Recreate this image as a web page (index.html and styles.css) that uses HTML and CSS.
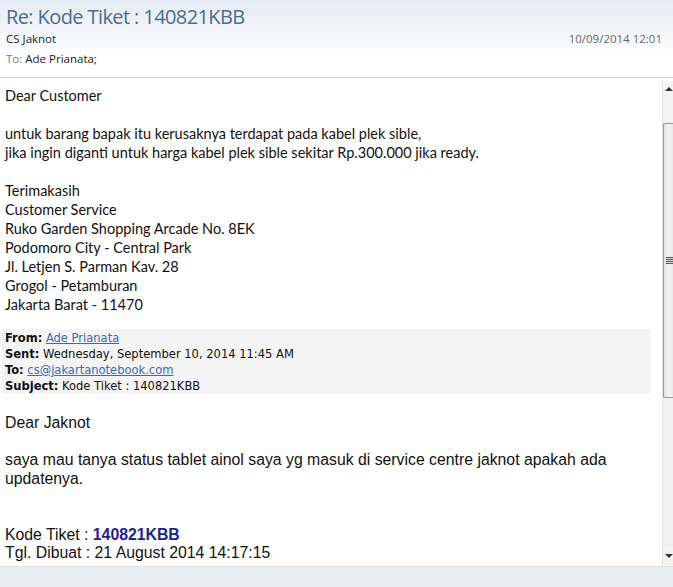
FILE: index.html
```html
<!DOCTYPE html>
<html>
<head>
<meta charset="utf-8">
<link rel="stylesheet" href="styles.css">
</head>
<body>
<div class="window">
  <header class="head">
    <div class="title">Re: Kode Tiket : 140821KBB</div>
    <div class="meta">
      <span class="sender">CS Jaknot</span>
      <span class="date">10/09/2014 12:01</span>
    </div>
    <div class="to"><span class="to-label">To:</span> Ade Prianata;</div>
  </header>
  <div class="sep"></div>
  <div class="main">
    <div class="content">
      <div class="reply">
        <p>Dear Customer</p>
        <p class="blank">&nbsp;</p>
        <p>untuk barang bapak itu kerusaknya terdapat pada kabel plek sible,</p>
        <p>jika ingin diganti untuk harga kabel plek sible sekitar Rp.300.000 jika ready.</p>
        <p class="blank">&nbsp;</p>
        <p>Terimakasih</p>
        <p>Customer Service</p>
        <p>Ruko Garden Shopping Arcade No. 8EK</p>
        <p>Podomoro City - Central Park</p>
        <p>Jl. Letjen S. Parman Kav. 28</p>
        <p>Grogol - Petamburan</p>
        <p>Jakarta Barat - 11470</p>
      </div>
      <div class="quote-head">
        <p><b>From:</b> <a href="#">Ade Prianata</a></p>
        <p><b>Sent:</b> Wednesday, September 10, 2014 11:45 AM</p>
        <p><b>To:</b> <a href="#">cs@jakartanotebook.com</a></p>
        <p><b>Subject:</b> Kode Tiket : 140821KBB</p>
      </div>
      <div class="original">
        <p>Dear Jaknot</p>
        <p class="blank">&nbsp;</p>
        <p>saya mau tanya status tablet ainol saya yg masuk di service centre jaknot apakah ada updatenya.</p>
        <p class="blank">&nbsp;</p>
        <p class="blank">&nbsp;</p>
        <p>Kode Tiket : <b class="code">140821KBB</b></p>
        <p>Tgl. Dibuat : 21 August 2014 14:17:15</p>
      </div>
    </div>
    <div class="scrollbar">
      <div class="arrow up"></div>
      <div class="track">
        <div class="thumb"><div class="grip"></div></div>
      </div>
      <div class="arrow down"></div>
    </div>
  </div>
  <div class="footer"></div>
</div>
</body>
</html>
```
FILE: styles.css
```css
* { box-sizing: border-box; }
html, body { margin: 0; padding: 0; }
body {
  width: 673px;
  height: 587px;
  overflow: hidden;
  background: #e9edf2;
  font-family: "Open Sans", "Noto Sans", sans-serif;
}
p { margin: 0; }
.window {
  display: flex;
  flex-direction: column;
  height: 587px;
}
.head {
  height: 77px;
  padding: 3px 11px 0 6px;
  background: linear-gradient(#e5ebf4 0%, #f3f6fa 45%, #ffffff 75%);
  color: #222;
}
.title {
  font-size: 20px;
  line-height: 28px;
  color: #4d6b8f;
  letter-spacing: -0.6px;
}
.meta {
  display: flex;
  justify-content: space-between;
  align-items: baseline;
  font-size: 11.5px;
  line-height: 16px;
}
.sender { color: #1e1e1e; }
.date { color: #666; }
.to {
  margin-top: 4px;
  font-size: 11.5px;
  line-height: 16px;
  color: #222;
}
.to-label { color: #777; }
.sep {
  height: 1px;
  background: #d3d3d3;
}
.main {
  height: 488px;
  display: flex;
  background: #fff;
  padding-top: 3px;
}
.content {
  flex: 1;
  padding: 5px 0 0 5px;
  overflow: hidden;
  background: #fff;
}
.reply {
  font-family: "Lato", "Open Sans", sans-serif;
  font-size: 14.5px;
  line-height: 19px;
  color: #111;
}
.quote-head {
  margin: 15px 11px 0 -3px;
  padding: 1px 3px 0 3px;
  background: #f4f4f4;
  font-family: "DejaVu Sans Condensed", "DejaVu Sans", sans-serif;
  font-size: 12.8px;
  line-height: 16px;
  color: #111;
}
.quote-head b { font-weight: bold; }
.quote-head a { color: #3a69b7; text-decoration: underline; }
.original {
  margin-top: 20px;
  font-family: "Liberation Sans", Arial, sans-serif;
  font-size: 15.8px;
  line-height: 18.6px;
  color: #111;
}
.code { color: #1f1f96; }
.scrollbar {
  width: 11px;
  display: flex;
  flex-direction: column;
  border-left: 1px solid #e4e4e4;
  background: #f0f0f0;
}
.arrow {
  height: 42px;
  position: relative;
  background: #f3f3f3;
}
.arrow.up::after {
  content: "";
  position: absolute;
  left: 2px;
  top: 6px;
  border-left: 4px solid transparent;
  border-right: 4px solid transparent;
  border-bottom: 4px solid #333;
}
.arrow.down { height: 20px; }
.arrow.down::after {
  content: "";
  position: absolute;
  left: 2px;
  top: 8px;
  border-left: 4px solid transparent;
  border-right: 4px solid transparent;
  border-top: 4px solid #333;
}
.track {
  flex: 1;
  background: #f0f0f0;
}
.thumb {
  height: 275px;
  border: 1px solid #9a9a9a;
  border-right: none;
  border-radius: 2px 0 0 2px;
  background: linear-gradient(90deg, #e2e2e2, #f2f2f2 60%, #e9e9e9);
  display: flex;
  align-items: center;
  justify-content: flex-end;
}
.grip {
  width: 7px;
  height: 7px;
  background: repeating-linear-gradient(#555 0 1px, #ddd 1px 2px);
}
.footer {
  flex: 1;
  background: #e9edf2;
  border-top: 1px solid #dcdfe4;
}
```
